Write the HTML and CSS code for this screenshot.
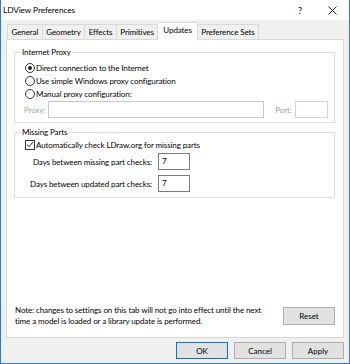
FILE: index.html
```html
<!DOCTYPE html>
<html lang="en">
<head>
  <meta charset="UTF-8">
  <title>LDView Preferences</title>
  <link rel="stylesheet" href="styles.css">
</head>
<body>
  <div class="window">
    <!-- Title bar -->
    <div class="titlebar">
      <span class="title">LDView Preferences</span>
      <span class="title-btn help">?</span>
      <span class="title-btn close">
        <svg width="9" height="9" viewBox="0 0 9 9"><path d="M0.5 0.5 L8.5 8.5 M8.5 0.5 L0.5 8.5" stroke="#222" stroke-width="1" fill="none"/></svg>
      </span>
    </div>

    <div class="dialog">
      <!-- Tabs -->
      <div class="tabs">
        <div class="tab">General</div>
        <div class="tab">Geometry</div>
        <div class="tab">Effects</div>
        <div class="tab">Primitives</div>
        <div class="tab active">Updates</div>
        <div class="tab">Preference Sets</div>
      </div>

      <div class="panel">
        <fieldset class="group proxy-group">
          <legend>Internet Proxy</legend>
          <label class="option"><span class="radio checked"></span>Direct connection to the Internet</label>
          <label class="option"><span class="radio"></span>Use simple Windows proxy configuration</label>
          <label class="option"><span class="radio"></span>Manual proxy configuration:</label>
          <div class="proxy-row">
            <span class="disabled">Proxy:</span>
            <span class="textbox proxy-box"></span>
            <span class="disabled port-label">Port:</span>
            <span class="textbox port-box"></span>
          </div>
        </fieldset>

        <fieldset class="group missing-group">
          <legend>Missing Parts</legend>
          <label class="option"><span class="checkbox">
            <svg width="9" height="9" viewBox="0 0 9 9"><path d="M1 4.5 L3.5 7 L8 1.5" stroke="#222" stroke-width="1.1" fill="none"/></svg>
          </span>Automatically check LDraw.org for missing parts</label>
          <div class="days-row">
            <span class="days-label">Days between missing part checks:</span>
            <span class="textbox days-box">7</span>
          </div>
          <div class="days-row">
            <span class="days-label">Days between updated part checks:</span>
            <span class="textbox days-box">7</span>
          </div>
        </fieldset>

        <div class="spacer"></div>

        <div class="note-row">
          <p class="note">Note: changes to settings on this tab will not go into effect until the next<br>time a model is loaded or a library update is performed.</p>
          <button class="btn reset">Reset</button>
        </div>
      </div>

      <!-- Dialog buttons -->
      <div class="actions">
        <button class="btn default">OK</button>
        <button class="btn">Cancel</button>
        <button class="btn">Apply</button>
      </div>
    </div>
  </div>
</body>
</html>
```

FILE: styles.css
```css
/* Reset default styles */
* {
  margin: 0;
  padding: 0;
  box-sizing: border-box;
  font-family: Lato, "Noto Sans", sans-serif;
}

body {
  background: #fff;
}

.window {
  width: 350px;
  height: 364px;
  background: #f0f0f0;
  border: 1px solid #2b7bd6;
  border-top: none;
  display: flex;
  flex-direction: column;
  font-size: 8px;
  letter-spacing: -0.1px;
  color: #000;
}

/* Title bar */
.titlebar {
  height: 20px;
  background: #fff;
  display: flex;
  align-items: center;
  padding-left: 2px;
}

.title {
  flex: 1;
  font-size: 8.3px;
}

.title-btn {
  width: 32px;
  text-align: center;
  font-size: 10px;
  color: #222;
}

.close {
  display: flex;
  justify-content: center;
  align-items: center;
  margin-right: 1px;
}

/* Dialog body */
.dialog {
  flex: 1;
  display: flex;
  flex-direction: column;
  padding: 2px 5px 0 5px;
}

.tabs {
  display: flex;
  padding-left: 1px;
  height: 17px;
  align-items: flex-end;
}

.tab {
  height: 15px;
  padding: 0 3.5px;
  border: 1px solid #d9d9d9;
  border-bottom: none;
  border-right: none;
  background: #f0f0f0;
  line-height: 14px;
  white-space: nowrap;
}

.tab.active {
  height: 18px;
  padding: 0 5px;
  margin-bottom: -1px;
  background: #fff;
  border-right: 1px solid #d9d9d9;
  position: relative;
  z-index: 1;
  line-height: 15px;
}

.tab.active + .tab {
  border-left: none;
  border-right: 1px solid #d9d9d9;
}

.panel {
  height: 299px;
  background: #fff;
  border: 1px solid #d9d9d9;
  display: flex;
  flex-direction: column;
  padding: 7px 8px 0 7px;
}

/* Group boxes */
.group {
  border: 1px solid #dcdcdc;
  padding: 3px 0 0 10px;
}

.group legend {
  padding: 0 1px;
  margin-left: -4px;
  line-height: 11px;
}

.proxy-group {
  height: 76px;
}

.missing-group {
  height: 71px;
  margin-top: 4px;
  padding-top: 0;
}

.option {
  display: flex;
  align-items: center;
  height: 13px;
  white-space: nowrap;
}

.radio {
  width: 10px;
  height: 10px;
  border: 1px solid #333;
  border-radius: 50%;
  margin-right: 1px;
  display: flex;
  justify-content: center;
  align-items: center;
}

.radio.checked::after {
  content: "";
  width: 4px;
  height: 4px;
  border-radius: 50%;
  background: #222;
}

.checkbox {
  width: 10px;
  height: 10px;
  border: 1px solid #333;
  margin-right: 1px;
  display: flex;
  justify-content: center;
  align-items: center;
}

.proxy-row {
  display: flex;
  align-items: center;
  margin-top: 1px;
  margin-left: -1px;
}

.disabled {
  color: #a0a0a0;
}

.textbox {
  height: 17px;
  border: 1px solid #c8c8c8;
  background: #fff;
}

.proxy-box {
  width: 216px;
  margin-left: 3px;
}

.port-label {
  margin-left: 11px;
}

.port-box {
  width: 33px;
  margin-left: 3px;
  border-color: #d4d4d4;
}

.days-row {
  display: flex;
  align-items: center;
  margin-top: 5px;
}

.option + .days-row {
  margin-top: 2px;
}

.days-label {
  width: 127px;
  text-align: right;
  white-space: nowrap;
}

.days-box {
  width: 32px;
  margin-left: 6px;
  border-color: #7a7a7a;
  padding-left: 3px;
  line-height: 15px;
}

.spacer {
  flex: 1;
}

/* Note and reset */
.note-row {
  display: flex;
  align-items: center;
  margin-bottom: 10px;
}

.note {
  flex: 1;
  line-height: 11px;
  padding-left: 1px;
  white-space: nowrap;
}

.btn {
  width: 52px;
  height: 18px;
  background: #e1e1e1;
  border: 1px solid #adadad;
  font-size: 8px;
  color: #000;
}

.actions {
  display: flex;
  justify-content: flex-end;
  gap: 6px;
  padding-top: 4px;
}

.actions .btn {
  height: 17px;
}

.btn.default {
  border-color: #0078d7;
}
```
